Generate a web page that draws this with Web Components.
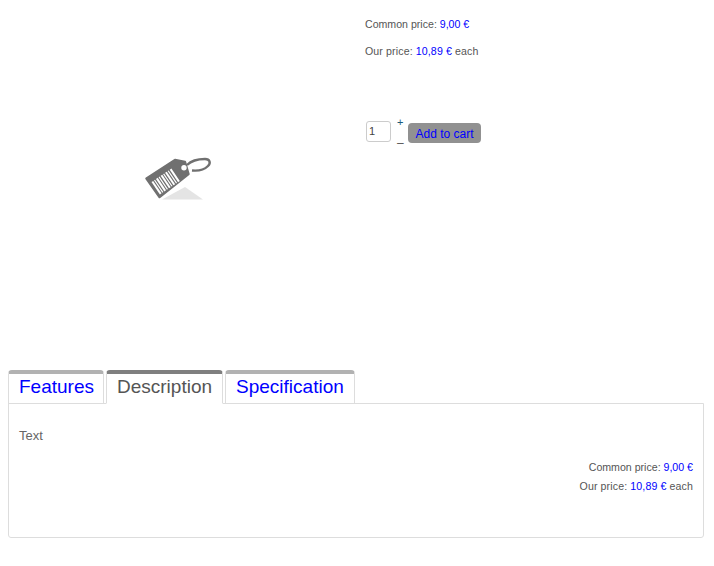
<!DOCTYPE html>
<html>
<head>
<meta charset="utf-8">
<title>Product</title>
<style>
    body {
        margin: 8px;
        font-family: "Liberation Sans", Arial, sans-serif;
        color: #555;
        background: #fff;
    }
</style>
</head>
<body>
<product-page>
    <product-summary slot="top" common="9,00 €" ours="10,89 €"></product-summary>
    <product-tabs slot="tabs">
        <tab-link>Features</tab-link>
        <tab-link active>Description</tab-link>
        <tab-link>Specification</tab-link>
        <div slot="panel" class="panel-text">Text</div>
        <price-note slot="panel" common="9,00 €" ours="10,89 €"></price-note>
    </product-tabs>
</product-page>

<script>
class ProductPage extends HTMLElement {
    constructor() {
        super();
        this.attachShadow({ mode: 'open' });
        this.shadowRoot.innerHTML = `
            <style>
                :host { display: block; width: 696px; }
                .top { height: 362px; }
            </style>
            <div class="top"><slot name="top"></slot></div>
            <slot name="tabs"></slot>
        `;
    }
}

class ProductSummary extends HTMLElement {
    constructor() {
        super();
        this.attachShadow({ mode: 'open' });
    }

    connectedCallback() {
        const common = this.getAttribute('common') || '';
        const ours = this.getAttribute('ours') || '';
        this.shadowRoot.innerHTML = `
            <style>
                :host {
                    display: grid;
                    grid-template-columns: 357px 1fr;
                    height: 100%;
                }
                .image {
                    display: flex;
                    justify-content: flex-start;
                    padding: 149px 0 0 137px;
                }
                .info {
                    font-size: 10.6px;
                    color: #555;
                    padding-top: 10px;
                }
                .info p { margin: 0 0 15px; line-height: 12px; }
                .info p.ours { letter-spacing: 0.12px; }
                b { font-weight: normal; color: #00f; }
                .buy {
                    display: flex;
                    align-items: flex-start;
                    margin-top: 64px;
                    margin-left: 1px;
                }
            </style>
            <div class="image"><tag-icon></tag-icon></div>
            <div class="info">
                <p>Common price: <b>${common}</b></p>
                <p class="ours">Our price: <b>${ours}</b> each</p>
                <div class="buy">
                    <qty-stepper value="1"></qty-stepper>
                    <cart-button>Add to cart</cart-button>
                </div>
            </div>
        `;
    }
}

class TagIcon extends HTMLElement {
    constructor() {
        super();
        this.attachShadow({ mode: 'open' });
        this.shadowRoot.innerHTML = `
            <style>:host { display: block; width: 70px; height: 50px; }</style>
            <svg width="70" height="50" viewBox="0 0 70 50">
                <polygon points="17,42.5 40,30 58,42.5" fill="#e4e4e4"/>
                <path d="M42 8 C46 4 52 2 60 2 C65 2 66 6 63 9 C59 13 52 14 47 13.5" fill="none" stroke="#707070" stroke-width="2.4"/>
                <polygon points="1.5,21.5 30,3 40,5 43.5,17 14.5,40" fill="#707070" stroke="#707070" stroke-width="2.4" stroke-linejoin="round"/>
                <circle cx="39" cy="10.7" r="2.7" fill="#fff"/>
                <g transform="translate(6.5 25) rotate(-34)" fill="#fff">
                    <rect x="0" y="0" width="2" height="15"/>
                    <rect x="3" y="0" width="1.2" height="15"/>
                    <rect x="5.4" y="0" width="2" height="15"/>
                    <rect x="8.5" y="0" width="1.2" height="15"/>
                    <rect x="11" y="0" width="2" height="15"/>
                    <rect x="14" y="0" width="1.2" height="15"/>
                    <rect x="16.4" y="0" width="2" height="15"/>
                    <rect x="19.5" y="0" width="1.2" height="15"/>
                    <rect x="22" y="0" width="2" height="15"/>
                </g>
            </svg>
        `;
    }
}

class QtyStepper extends HTMLElement {
    constructor() {
        super();
        this.attachShadow({ mode: 'open' });
    }

    connectedCallback() {
        const value = this.getAttribute('value') || '1';
        this.shadowRoot.innerHTML = `
            <style>
                :host {
                    display: flex;
                    width: 42px;
                    font-family: "Liberation Sans", Arial, sans-serif;
                }
                .box {
                    box-sizing: border-box;
                    width: 25px;
                    height: 21px;
                    border: 1px solid #ccc;
                    border-radius: 3px;
                    font-size: 11px;
                    line-height: 19px;
                    padding-left: 2px;
                    color: #444;
                }
                .steps {
                    display: flex;
                    flex-direction: column;
                    justify-content: space-between;
                    margin: -5px 0 0 6px;
                    height: 33px;
                    font-size: 11px;
                    line-height: 12px;
                    color: #1c5a7a;
                }
                .steps span:last-child { color: #555; font-size: 12px; }
            </style>
            <div class="box">${value}</div>
            <div class="steps"><span>+</span><span>–</span></div>
        `;
    }
}

class CartButton extends HTMLElement {
    constructor() {
        super();
        this.attachShadow({ mode: 'open' });
        this.shadowRoot.innerHTML = `
            <style>
                :host {
                    display: block;
                    box-sizing: border-box;
                    width: 73px;
                    height: 20px;
                    margin-top: 2px;
                    background: #919191;
                    border-radius: 4px;
                    color: #00f;
                    font-size: 12px;
                    line-height: 22px;
                    text-align: center;
                }
            </style>
            <slot></slot>
        `;
    }
}

class ProductTabs extends HTMLElement {
    constructor() {
        super();
        this.attachShadow({ mode: 'open' });
        this.shadowRoot.innerHTML = `
            <style>
                :host { display: block; }
                .bar {
                    display: flex;
                    gap: 2px;
                    position: relative;
                    z-index: 1;
                    margin-bottom: -1px;
                }
                .panel {
                    box-sizing: border-box;
                    height: 135px;
                    border: 1px solid #ddd;
                    border-radius: 0 0 3px 3px;
                    padding: 24px 10px 0;
                }
                ::slotted(.panel-text) {
                    font-size: 13px;
                    line-height: 16px;
                    color: #666;
                    margin-bottom: 14px;
                }
            </style>
            <div class="bar"><slot></slot></div>
            <div class="panel"><slot name="panel"></slot></div>
        `;
    }
}

class TabLink extends HTMLElement {
    constructor() {
        super();
        this.attachShadow({ mode: 'open' });
        this.shadowRoot.innerHTML = `
            <style>
                :host {
                    display: block;
                    box-sizing: border-box;
                    height: 34px;
                    padding: 0 10px;
                    background: #fff;
                    border: 1px solid #ddd;
                    border-top: 4px solid #b2b2b2;
                    border-radius: 4px 4px 0 0;
                    font-size: 19px;
                    line-height: 26px;
                    color: #00f;
                }
                :host(:first-child) { padding-right: 9px; }
                :host([active]) {
                    border-top-color: #7f7f7f;
                    border-bottom-color: #fff;
                    color: #555;
                }
            </style>
            <slot></slot>
        `;
    }
}

class PriceNote extends HTMLElement {
    constructor() {
        super();
        this.attachShadow({ mode: 'open' });
    }

    connectedCallback() {
        const common = this.getAttribute('common') || '';
        const ours = this.getAttribute('ours') || '';
        this.shadowRoot.innerHTML = `
            <style>
                :host {
                    display: block;
                    font-size: 10.6px;
                    line-height: 19px;
                    color: #555;
                    text-align: right;
                }
                b { font-weight: normal; color: #00f; }
                .ours { letter-spacing: 0.12px; }
            </style>
            <div>Common price: <b>${common}</b></div>
            <div class="ours">Our price: <b>${ours}</b> each</div>
        `;
    }
}

customElements.define('product-page', ProductPage);
customElements.define('product-summary', ProductSummary);
customElements.define('tag-icon', TagIcon);
customElements.define('qty-stepper', QtyStepper);
customElements.define('cart-button', CartButton);
customElements.define('product-tabs', ProductTabs);
customElements.define('tab-link', TabLink);
customElements.define('price-note', PriceNote);
</script>
</body>
</html>
